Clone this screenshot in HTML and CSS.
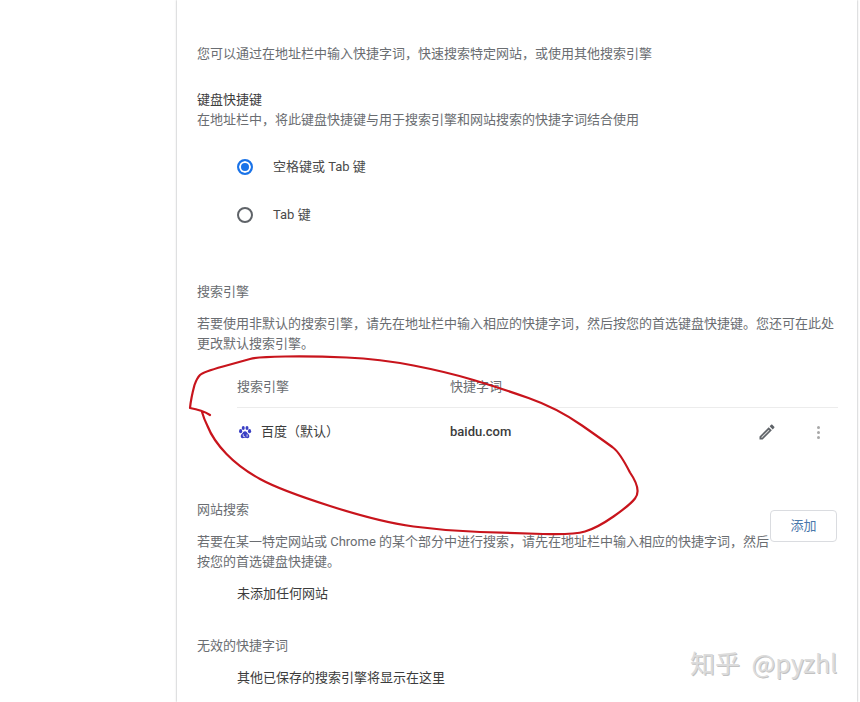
FILE: index.html
```html
<!DOCTYPE html>
<html lang="zh-CN">
<head>
    <meta charset="UTF-8">
    <meta name="viewport" content="width=device-width, initial-scale=1.0">
    <title>管理搜索引擎</title>
    <link rel="stylesheet" href="styles.css">
</head>
<body>

    <div class="card">
        <p class="muted intro">您可以通过在地址栏中输入快捷字词，快速搜索特定网站，或使用其他搜索引擎</p>

        <div class="dark">键盘快捷键</div>
        <p class="muted">在地址栏中，将此键盘快捷键与用于搜索引擎和网站搜索的快捷字词结合使用</p>

        <div class="radio-group">
            <div class="radio-row">
                <span class="radio checked"></span>
                <span class="radio-label">空格键或 Tab 键</span>
            </div>
            <div class="radio-row">
                <span class="radio"></span>
                <span class="radio-label">Tab 键</span>
            </div>
        </div>

        <h2 class="section-title engines-title">搜索引擎</h2>
        <p class="muted section-text">若要使用非默认的搜索引擎，请先在地址栏中输入相应的快捷字词，然后按您的首选键盘快捷键。您还可在此处更改默认搜索引擎。</p>

        <div class="table">
            <div class="table-head">
                <span class="col-name">搜索引擎</span>
                <span>快捷字词</span>
            </div>
            <div class="table-row">
                <span class="col-name engine">
                    <svg class="paw" viewBox="0 0 16 16" width="14" height="14">
                        <ellipse cx="3" cy="7" rx="1.8" ry="2.3" fill="#3a3fc4"/>
                        <ellipse cx="6" cy="3.4" rx="1.7" ry="2.3" fill="#3a3fc4"/>
                        <ellipse cx="10.3" cy="3.4" rx="1.7" ry="2.3" fill="#3a3fc4"/>
                        <ellipse cx="13.2" cy="7" rx="1.8" ry="2.3" fill="#3a3fc4"/>
                        <path d="M8 7C6 7 5.500 9 4.200 10.200 2.700 11.500 2.500 15 5.500 15 6.800 15 7.200 14.600 8 14.600 8.800 14.600 9.400 15 10.700 15 13.600 15 13.400 11.500 11.800 10.200 10.500 9 10 7 8 7Z" fill="#3a3fc4"/>
                        <path d="M6 10.500V12.600C6 13.700 7.800 13.700 7.800 12.600M10.400 10.800V13.400" fill="none" stroke="#fff" stroke-width="0.9"/>
                    </svg>
                    百度（默认）
                </span>
                <span class="keyword">baidu.com</span>
                <svg class="pencil" viewBox="0 0 24 24" width="20" height="20">
                    <path d="M3 17.250V21h3.750L17.810 9.940l-3.750-3.750L3 17.250zM20.710 7.040c.39-.39.39-1.020 0-1.410l-2.340-2.340c-.39-.39-1.020-.39-1.410 0l-1.830 1.830 3.750 3.750 1.830-1.830z" fill="#5f6368"/>
                    <path d="M5 18.200l9-9 .9.900-9 9z" fill="#d8d8d8"/>
                </svg>
                <span class="more">
                    <i></i><i></i><i></i>
                </span>
            </div>
        </div>

        <div class="site-search">
            <div class="site-search-text">
                <h2 class="section-title">网站搜索</h2>
                <p class="muted section-text">若要在某一特定网站或 Chrome 的某个部分中进行搜索，请先在地址栏中输入相应的快捷字词，然后按您的首选键盘快捷键。</p>
            </div>
            <button class="add-button">添加</button>
        </div>
        <p class="dark empty">未添加任何网站</p>

        <h2 class="section-title inactive-title">无效的快捷字词</h2>
        <p class="dark empty">其他已保存的搜索引擎将显示在这里</p>
    </div>

    <!-- 手画的红圈 -->
    <svg class="scribble" viewBox="0 0 860 702" width="860" height="702">
        <path d="M210 415Q202 410 190 408Q191 398 194.500 385Q197 378 200 375Q203 372 223 366.500Q243 361 250 359Q257 357 285 356.500Q313 356 346.500 357.500Q380 359 413.500 365.500Q447 372 473.500 380Q500 388 528.500 398Q557 408 582 425.500Q607 443 613.500 448Q620 453 630 472.500Q642 490 635 498.500Q630 505 613.500 516.500Q597 528 585 531.500Q573 535 543 534Q513 533 480 532Q447 531 413.500 526.500Q380 522 330 506Q280 490 260 479Q240 468 226.500 454Q213 440 207.500 426Q204 419 202 412" fill="none" stroke="#c8141c" stroke-width="2.200" stroke-linecap="round" stroke-linejoin="round"/>
    </svg>

    <div class="watermark">知乎 @pyzhl</div>

</body>
</html>
```

FILE: styles.css
```css
body {
    margin: 0;
    background-color: #fff;
    font-family: Roboto, "Noto Sans CJK SC", sans-serif;
    font-size: 13px;
    line-height: 20px;
    color: #3c3c3c;
    height: 702px;
    overflow: hidden;
    position: relative;
}

p, h2 {
    margin: 0;
    font-size: 13px;
    font-weight: 400;
}

.card {
    box-sizing: border-box;
    width: 680px;
    height: 702px;
    margin-left: 177px;
    padding: 44px 20px 0;
    background-color: #fff;
    box-shadow: 0 0 2px rgba(60, 64, 67, 0.5);
}

.muted, .section-title {
    color: #6a6d71;
}

.dark {
    color: #3c3c3c;
}

.intro {
    margin-bottom: 26px;
}

/* 单选按钮 */
.radio-group {
    margin-top: 13px;
    margin-left: 40px;
}

.radio-row {
    display: flex;
    align-items: center;
    height: 48px;
}

.radio {
    width: 16px;
    height: 16px;
    box-sizing: border-box;
    border: 2px solid #5f6368;
    border-radius: 50%;
    margin-right: 20px;
    background-color: #fff;
}

.radio.checked {
    border-color: #1a73e8;
    background-color: #1a73e8;
    box-shadow: inset 0 0 0 2px #fff;
}

.radio-label {
    color: #4a4a4a;
}

.engines-title {
    margin-top: 43px;
}

.section-text {
    margin-top: 12px;
}

/* 搜索引擎表格 */
.table {
    margin-top: 12px;
    margin-left: 40px;
    width: 601px;
}

.table-head {
    display: flex;
    align-items: center;
    height: 41px;
    border-bottom: 1px solid #ececec;
    color: #6a6d71;
}

.col-name {
    width: 213px;
    flex-shrink: 0;
}

.table-row {
    display: flex;
    align-items: center;
    height: 48px;
}

.engine {
    display: flex;
    align-items: center;
}

.paw {
    margin-left: 1px;
    margin-right: 9px;
}

.keyword {
    font-weight: 500;
    flex-grow: 1;
}

.pencil {
    margin-right: 40px;
}

.more {
    display: flex;
    flex-direction: column;
    gap: 2px;
    margin-right: 18px;
}

.more i {
    width: 3px;
    height: 3px;
    border-radius: 50%;
    background-color: #a8a8a8;
}

/* 网站搜索 */
.site-search {
    display: flex;
    align-items: flex-start;
    margin-top: 44px;
}

.site-search-text {
    width: 573px;
    flex-shrink: 0;
}

.add-button {
    width: 67px;
    height: 32px;
    margin-top: 10px;
    padding: 0 0 3px;
    background-color: #fff;
    border: 1px solid #dadce0;
    border-radius: 4px;
    font-family: inherit;
    font-size: 13px;
    color: #4a78ab;
}

.empty {
    margin-top: 12px;
    margin-left: 40px;
}

.inactive-title {
    margin-top: 32px;
}

/* 盖在页面上的红圈和水印 */
.scribble {
    position: absolute;
    top: 0;
    left: 0;
    pointer-events: none;
}

.watermark {
    position: absolute;
    left: 690px;
    top: 645px;
    font-size: 25px;
    line-height: 34px;
    word-spacing: 6px;
    font-family: "Noto Sans CJK SC", sans-serif;
    white-space: nowrap;
    color: #dcdcdc;
    text-shadow: 1px 1px 0 #c2c2c2;
}
```
